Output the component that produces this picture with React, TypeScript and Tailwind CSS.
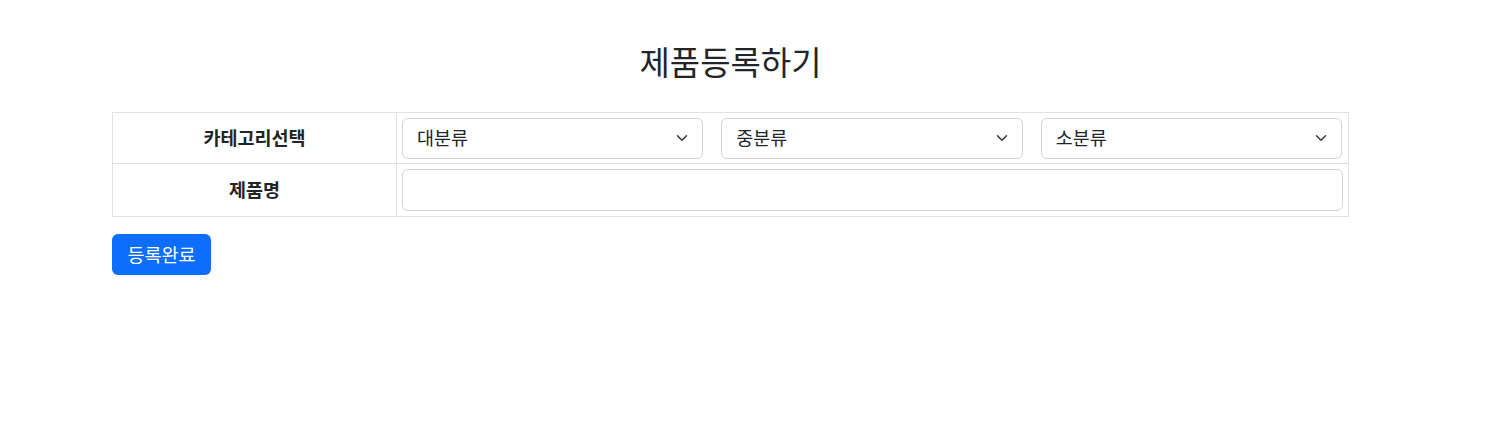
import React from "react";

function Chevron() {
  return (
    <svg width="16" height="12" viewBox="0 0 16 16" className="absolute right-[12px] top-1/2 -translate-y-1/2" fill="none">
      <path d="m2 5 6 6 6-6" stroke="#343a40" strokeWidth="2" strokeLinecap="round" strokeLinejoin="round" />
    </svg>
  );
}

function Select({ label }: { label: string }) {
  return (
    <div className="relative h-[41px] rounded-[6px] border border-[#ced4da] bg-white flex items-center pl-[14px] text-[18.5px] text-[#212529]">
      <span>{label}</span>
      <Chevron />
    </div>
  );
}

export default function App() {
  const font = { fontFamily: '"Noto Sans CJK KR", "Noto Sans", sans-serif' };
  return (
    <div className="min-h-[435px] bg-white text-[#212529]" style={font}>
      <div className="w-[1237px] ml-[112px] pt-[41px]">
        <h2 className="text-center text-[33px] leading-[40px] font-normal mb-[31px]">제품등록하기</h2>
        <table className="w-full border-collapse border border-[#dee2e6]">
          <tbody>
            <tr className="h-[51px]">
              <th className="w-[284px] border border-[#dee2e6] text-center text-[18.5px] font-bold">카테고리선택</th>
              <td className="border border-[#dee2e6] px-[5px] py-[4px]">
                <div className="grid grid-cols-3 gap-[18px] pr-[1px]">
                  <Select label="대분류" />
                  <Select label="중분류" />
                  <Select label="소분류" />
                </div>
              </td>
            </tr>
            <tr className="h-[53px]">
              <th className="border border-[#dee2e6] text-center text-[18.5px] font-bold">제품명</th>
              <td className="border border-[#dee2e6] px-[5px] py-[4px]">
                <input className="block w-full h-[42px] rounded-[6px] border border-[#ced4da] bg-white px-3 outline-none" />
              </td>
            </tr>
          </tbody>
        </table>
        <button className="mt-[17px] h-[41px] w-[99px] rounded-[6px] bg-[#0d6efd] text-white text-[18.5px]">등록완료</button>
      </div>
    </div>
  );
}
